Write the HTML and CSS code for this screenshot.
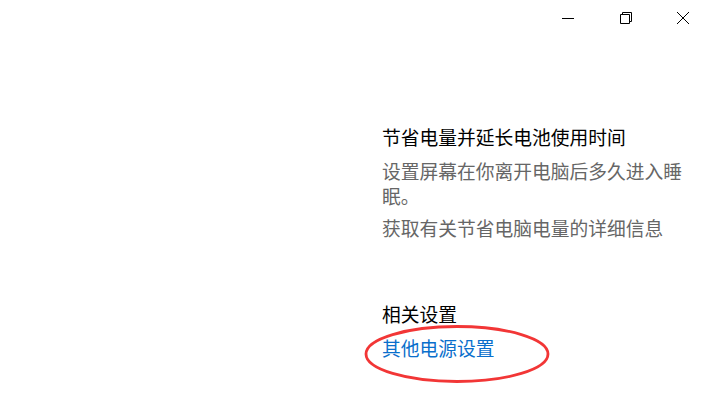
FILE: index.html
```html
<!DOCTYPE html>
<html lang="zh-CN">
<head>
<meta charset="utf-8">
<title>电源和睡眠</title>
<link rel="stylesheet" href="styles.css">
</head>
<body>
<header class="titlebar">
  <div class="cap">
    <svg width="14" height="14" viewBox="0 0 14 14"><path d="M1 7.5H13" stroke="#000" stroke-width="1" fill="none"/></svg>
  </div>
  <div class="cap">
    <svg width="14" height="14" viewBox="0 0 14 14"><path d="M1.5 3.5H10.5V12.5H1.5Z" stroke="#000" stroke-width="1" fill="none"/><path d="M3.5 3.5V1.5H12.5V10.5H10.5" stroke="#000" stroke-width="1" fill="none"/></svg>
  </div>
  <div class="cap">
    <svg width="14" height="14" viewBox="0 0 14 14"><path d="M1 1L13 13M13 1L1 13" stroke="#000" stroke-width="1" fill="none"/></svg>
  </div>
</header>
<main class="page">
  <section class="col">
    <h2 class="title">节省电量并延长电池使用时间</h2>
    <p class="desc">设置屏幕在你离开电脑后多久进入睡眠。</p>
    <p class="desc second">获取有关节省电脑电量的详细信息</p>
    <h2 class="title related">相关设置</h2>
    <a class="link" href="#">其他电源设置</a>
  </section>
</main>
<svg class="mark" width="190" height="62" viewBox="0 0 190 62">
  <ellipse cx="94" cy="30" rx="91" ry="27.5" fill="none" stroke="#f23636" stroke-width="2.8"/>
</svg>
</body>
</html>
```

FILE: styles.css
```css
html, body {
  margin: 0;
  padding: 0;
  background: #ffffff;
}
body {
  width: 712px;
  height: 402px;
  overflow: hidden;
  position: relative;
  font-family: "Noto Sans CJK SC", "Noto Sans", sans-serif;
}
.titlebar {
  display: flex;
  justify-content: flex-end;
  height: 36px;
}
.cap {
  width: 57.5px;
  height: 36px;
  display: flex;
  align-items: center;
  justify-content: center;
}
.page {
  padding: 88px 0 0 382px;
}
.col {
  width: 312px;
  display: flex;
  flex-direction: column;
  align-items: flex-start;
}
.title {
  margin: 0;
  font-size: 18.75px;
  line-height: 25px;
  font-weight: normal;
  color: #000;
}
.desc {
  margin: 9px 0 0;
  font-size: 18.75px;
  line-height: 25px;
  color: #666;
}
.desc.second {
  margin-top: 6.5px;
}
.related {
  margin-top: 61.5px;
}
.link {
  margin-top: 9px;
  font-size: 18.75px;
  line-height: 25px;
  color: #0a6fcc;
  text-decoration: none;
}
.mark {
  position: absolute;
  left: 363px;
  top: 324px;
}
```
